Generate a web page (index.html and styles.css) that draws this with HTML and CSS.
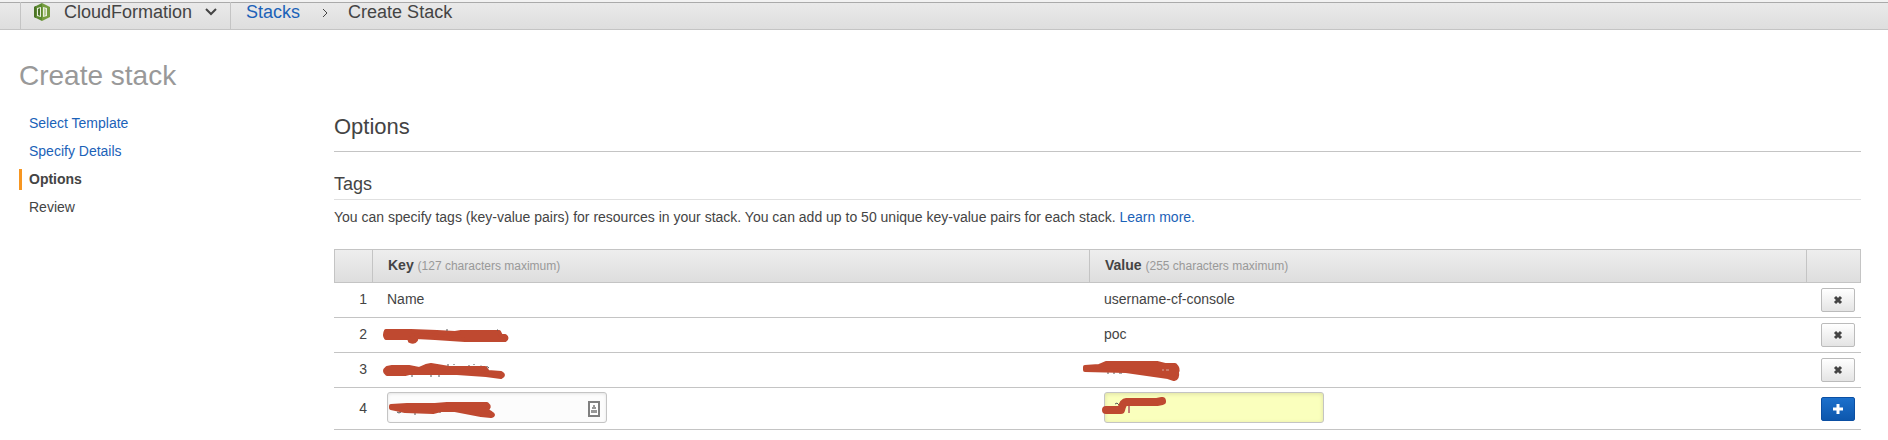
FILE: index.html
```html
<!DOCTYPE html>
<html lang="en">
<head>
<meta charset="utf-8">
<title>Create stack</title>
<link rel="stylesheet" href="styles.css">
</head>
<body>
<header class="topbar">
  <button class="service" type="button">
    <svg class="logo" viewBox="0 0 16 18" aria-hidden="true">
      <path fill="#5c8a30" d="M0 4 8 0V18L0 14Z"/>
      <path fill="#759c3e" d="M8 0 16 4V14L8 18Z"/>
      <path fill="#4b7327" d="M0 4 2 3V15L0 14Z"/>
      <path fill="#e9eedf" d="M3 5 7 4V14L3 13ZM9 4 13 5V13L9 14Z"/>
      <path fill="#4b7327" d="M4 6 6 5V13L4 12Z"/>
      <path fill="#b5cb92" d="M10 5 12 6V12L10 13Z"/>
    </svg>
    <span>CloudFormation</span>
    <svg class="chevron" viewBox="0 0 12 8" aria-hidden="true"><path d="M1 1 6 6 11 1"/></svg>
  </button>
  <nav class="crumbs" aria-label="Breadcrumb">
    <a href="#">Stacks</a>
    <svg class="crumb-arrow" viewBox="0 0 6 8" aria-hidden="true"><path d="M1 0 5 4 1 8"/></svg>
    <span>Create Stack</span>
  </nav>
</header>
<div class="page">
  <h1 class="title">Create stack</h1>
  <div class="columns">
    <nav class="steps" aria-label="Steps">
      <a class="step" href="#">Select Template</a>
      <a class="step" href="#">Specify Details</a>
      <span class="step step-current" aria-current="step">Options</span>
      <span class="step">Review</span>
    </nav>
    <main class="main">
      <h2 class="heading">Options</h2>
      <h3 class="subheading">Tags</h3>
      <p class="intro">You can specify tags (key-value pairs) for resources in your stack. You can add up to 50 unique key-value pairs for each stack. <a href="#">Learn more.</a></p>
      <table class="tags">
        <colgroup><col class="col-num"><col><col><col class="col-action"></colgroup>
        <thead>
          <tr>
            <th></th>
            <th>Key <small>(127 characters maximum)</small></th>
            <th>Value <small>(255 characters maximum)</small></th>
            <th></th>
          </tr>
        </thead>
        <tbody>
          <tr>
            <td>1</td>
            <td>Name</td>
            <td>username-cf-console</td>
            <td><button class="btn" type="button" aria-label="Remove tag 1"><svg viewBox="0 0 10 10"><path d="M2 2 8 8M8 2 2 8"/></svg></button></td>
          </tr>
          <tr>
            <td>2</td>
            <td>
              <svg class="scribble" viewBox="0 0 200 34" aria-hidden="true">
                <path class="ink" d="M13 13H38L64 14 82 15 88 14H126L128 18H132Q135 20 132 22H92L62 20 43 19V22Q41 25 37 23L36 20H13Q11 17 13 13Z"/>
                <path class="trace" d="M73 12h2M124 12h1"/>
              </svg>
            </td>
            <td>poc</td>
            <td><button class="btn" type="button" aria-label="Remove tag 2"><svg viewBox="0 0 10 10"><path d="M2 2 8 8M8 2 2 8"/></svg></button></td>
          </tr>
          <tr>
            <td>3</td>
            <td>
              <svg class="scribble" viewBox="0 0 200 34" aria-hidden="true">
                <path class="trace" d="M39 20v4M58 20v4M66 20v4M75 11v4M81 11v1M96 12v3M101 11v1M106 14q2-2 4 0M112 15q2-3 4 0"/>
                <path class="ink" d="M14 15 19 14H36L46 16 53 13 58 12 76 15H112L115 19 128 20Q132 22 128 24L113 22 84 20H36L32 21H14Q10 18 14 15Z"/>
              </svg>
            </td>
            <td>
              <svg class="scribble" viewBox="0 0 200 34" aria-hidden="true">
                <path class="trace" d="M18 19v2M23 20h2M29 20h3"/>
                <path class="ink" d="M-5 14 9 13 16 10H67L75 12H85Q89 16 87 19 88 25 84 26L78 24 64 22 36 18-5 17Z"/>
                <path class="glint" d="M72 17h2M76 17h3"/>
              </svg>
            </td>
            <td><button class="btn" type="button" aria-label="Remove tag 3"><svg viewBox="0 0 10 10"><path d="M2 2 8 8M8 2 2 8"/></svg></button></td>
          </tr>
          <tr class="row-edit">
            <td>4</td>
            <td>
              <input class="field" type="text" aria-label="Key">
              <svg class="autofill" viewBox="0 0 12 16" aria-hidden="true">
                <rect x="1" y="1" width="10" height="14" fill="#fff" stroke="#808080" stroke-width="2"/>
                <path fill="#999" d="M5 4H7V6H8V8H4V6H5ZM3 9H9V12H3Z"/>
              </svg>
              <svg class="scribble" viewBox="0 0 200 34" aria-hidden="true">
                <path class="trace" d="M24 24q2 2 4 0M42 23v4M53 24h2M66 24h2"/>
                <path class="ink" d="M18 18 34 17H62L74 16H114Q118 19 113 22L118 25Q122 27 118 28L108 27 82 22H68L60 24 32 23 18 20Z"/>
              </svg>
            </td>
            <td>
              <input class="field field-filled" type="text" aria-label="Value">
              <svg class="scribble" viewBox="0 0 200 34" aria-hidden="true">
                <path class="trace" d="M25 16l2-1 2 2M30 24h4"/>
                <path class="caret" d="M39 17v8"/>
                <path class="ink-line" d="M16 22H31Q33 14 36 14H67L72 13"/>
              </svg>
            </td>
            <td><button class="btn btn-primary" type="button" aria-label="Add tag"><svg viewBox="0 0 10 10"><path d="M5 0V10M0 5H10"/></svg></button></td>
          </tr>
        </tbody>
      </table>
    </main>
  </div>
</div>
</body>
</html>
```
FILE: styles.css
```css
* {
  box-sizing: border-box;
}

body {
  margin: 0;
  background: #fff;
  color: #444;
  font: 14px/20px "Liberation Sans", Arial, sans-serif;
}

a {
  color: #1b62b8;
  text-decoration: none;
}

.topbar {
  display: flex;
  height: 30px;
  padding-left: 20px;
  border-top: 2px solid #f2f2f2;
  border-bottom: 1px solid #c4c4c4;
  background: linear-gradient(#eaeaea, #dedede);
  box-shadow: inset 0 1px #aaa;
  font-size: 18px;
  line-height: 18px;
}

.service {
  display: flex;
  align-items: flex-start;
  padding: 1px 13px 0;
  border: solid #c4c4c4;
  border-width: 0 1px;
  background: none;
  color: inherit;
  font: inherit;
}

.logo {
  width: 16px;
  height: 18px;
  margin-right: 14px;
}

.chevron {
  width: 12px;
  height: 8px;
  margin: 5px 0 0 13px;
  fill: none;
  stroke: #444;
  stroke-width: 2;
}

.crumbs {
  display: flex;
  gap: 20px;
  padding: 1px 0 0 15px;
}

.crumb-arrow {
  width: 6px;
  height: 8px;
  margin: 6px 0 0 2px;
  fill: none;
  stroke: #444;
}

.page {
  padding: 30px 27px 0 19px;
}

.title {
  margin: 0 0 21px;
  color: #999;
  font-size: 28px;
  font-weight: 400;
  line-height: 32px;
}

.columns {
  display: flex;
}

.steps {
  display: flex;
  flex: 0 0 315px;
  flex-direction: column;
  gap: 7px;
}

.step {
  padding: 0 0 1px 7px;
  border-left: 3px solid transparent;
}

.step-current {
  border-color: #f79621;
  font-weight: 700;
}

.main {
  flex: 1;
  min-width: 0;
}

.heading,
.subheading {
  margin: 0;
  font-weight: 400;
}

.heading {
  padding-bottom: 10px;
  border-bottom: 1px solid #c4c4c4;
  font-size: 22px;
  line-height: 28px;
}

.subheading {
  margin-top: 21px;
  padding-bottom: 4px;
  border-bottom: 1px solid #e0e0e0;
  font-size: 18px;
  line-height: 22px;
}

.intro {
  margin: 7px 0 22px;
}

.tags {
  width: 100%;
  border-spacing: 0;
  table-layout: fixed;
}

.col-num {
  width: 39px;
}

.col-action {
  width: 54px;
}

.tags th {
  height: 34px;
  padding: 0 15px 2px;
  border: solid #c4c4c4;
  border-width: 1px 1px 1px 0;
  background: linear-gradient(#eee, #dedede);
  line-height: 20px;
  text-align: left;
}

.tags th:first-child {
  border-left-width: 1px;
}

.tags small {
  color: #999;
  font-size: 12px;
  font-weight: 400;
}

.tags td {
  position: relative;
  height: 35px;
  padding: 0 14px 2px;
  border-bottom: 1px solid #c4c4c4;
}

.tags td:first-child {
  padding: 0 6px 2px;
  text-align: right;
}

.tags td:last-child {
  padding: 0 6px 0 0;
  line-height: 0;
  text-align: right;
}

.tags .row-edit td {
  height: 42px;
}

.btn {
  display: inline-flex;
  align-items: center;
  justify-content: center;
  width: 34px;
  height: 24px;
  padding: 0;
  border: 1px solid #bbb;
  border-radius: 2px;
  background: linear-gradient(#fff, #e4e4e4);
  vertical-align: middle;
}

.btn svg {
  width: 10px;
  height: 10px;
  fill: none;
  stroke: #444;
  stroke-width: 3;
}

.btn-primary {
  border-color: #0b4fa3;
  background: linear-gradient(#1c70cc, #0d57ad);
}

.btn-primary svg {
  stroke: #fff;
}

.field {
  display: block;
  width: 220px;
  height: 31px;
  padding: 0 8px;
  border: 1px solid #c4c4c4;
  border-radius: 3px;
  background: #fcfcfc;
  box-shadow: inset 0 1px 3px #e4e4e4;
  font: inherit;
}

.field-filled {
  background: #faffbd;
  box-shadow: inset 0 1px 4px #dde0a4;
}

.autofill {
  position: absolute;
  top: 13px;
  left: 215px;
  width: 12px;
  height: 16px;
}

.scribble {
  position: absolute;
  top: 0;
  left: 0;
  width: 200px;
  height: 34px;
  overflow: visible;
  fill: none;
  pointer-events: none;
}

.ink {
  fill: #bf4930;
  stroke: #bf4930;
  stroke-linejoin: round;
  stroke-width: 4;
}

.ink-line {
  stroke: #bf4930;
  stroke-linecap: round;
  stroke-linejoin: round;
  stroke-width: 8;
}

.trace {
  stroke: #555;
}

.glint {
  stroke: #d8a79c;
}

.caret {
  stroke: #8c0035;
}
```
